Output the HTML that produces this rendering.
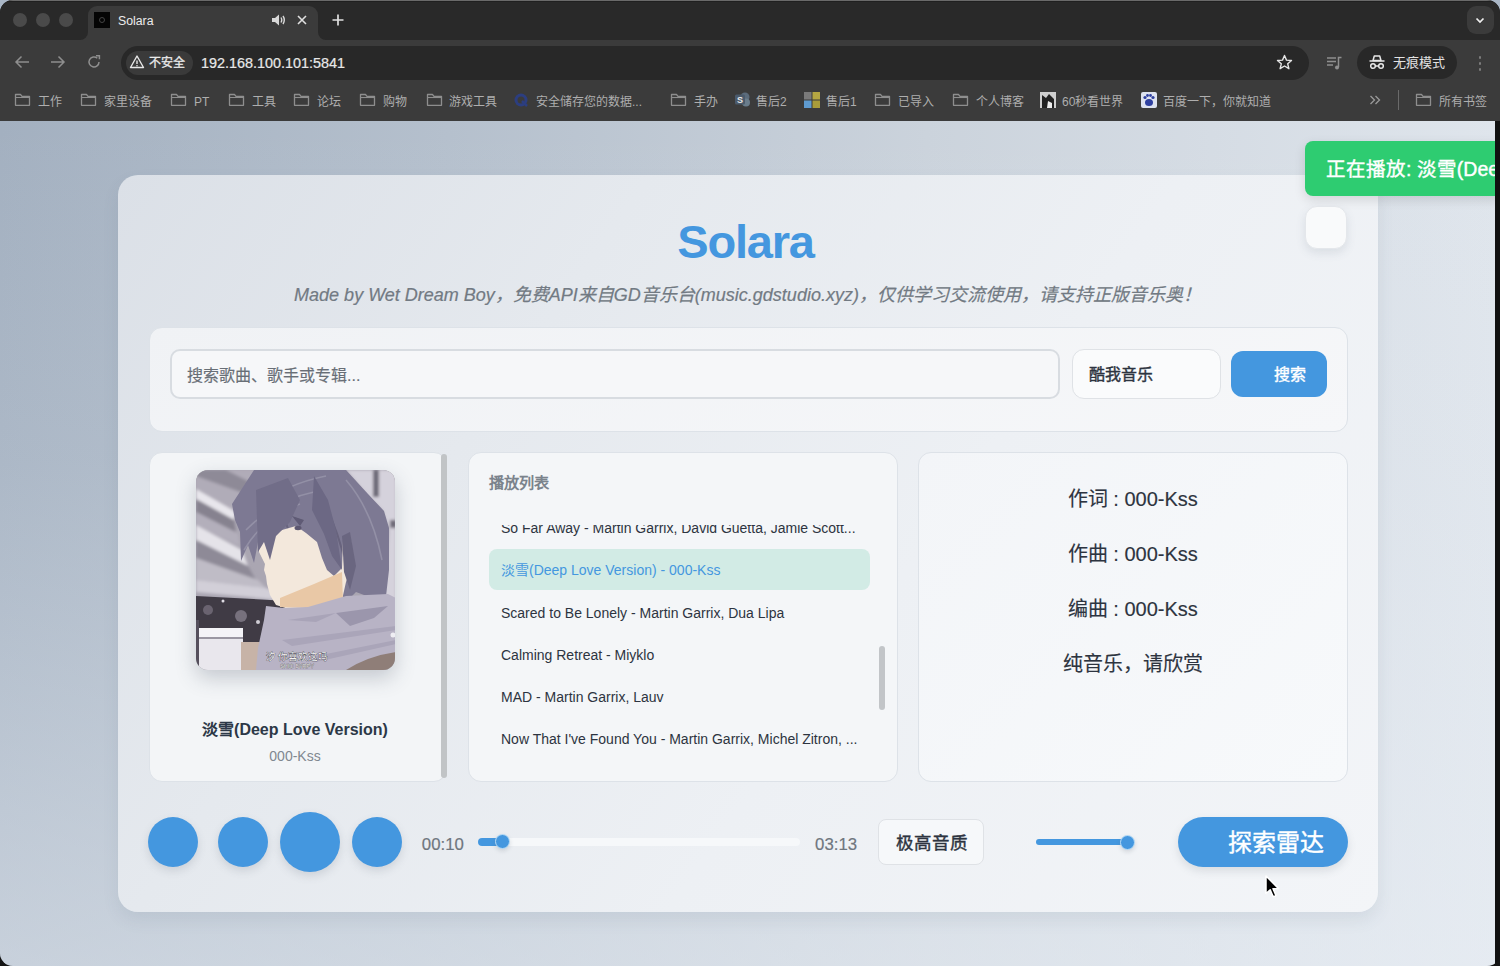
<!DOCTYPE html>
<html lang="zh-CN"><head><meta charset="utf-8">
<style>
*{margin:0;padding:0;box-sizing:border-box}
html,body{width:1500px;height:966px;overflow:hidden}
body{position:relative;background:linear-gradient(#a9b6c6 50%,#141414 50%);font-family:"Liberation Sans",sans-serif}
.abs{position:absolute}
#win{position:absolute;left:0;top:0;width:1500px;height:966px;overflow:hidden;border-radius:13px;background:#111}
#tabs{position:absolute;left:0;top:0;width:1500px;height:40px;background:#292929}
#toolbar{position:absolute;left:0;top:40px;width:1500px;height:81px;background:#3b3b3b}
#page{position:absolute;left:0;top:121px;width:1495px;height:845px;overflow:hidden;
 background:linear-gradient(180deg,rgba(236,241,247,0) 0%,rgba(236,241,247,.12) 40%,rgba(236,241,247,.5) 100%),linear-gradient(90deg,#a3b0c0 0%,#b5c0cd 30%,#cbd3dc 62%,#dfe5ec 100%)}
.t{position:absolute;white-space:nowrap}
</style></head>
<body>
<div id="win">
 <div id="tabs">
  <div class="abs" style="left:0;top:0;width:1500px;height:1px;background:#6a6a6a"></div>
  <div class="abs" style="left:0;top:1px;width:1500px;height:1px;background:#202020"></div>
  <div class="abs" style="left:13px;top:13px;width:14px;height:14px;border-radius:50%;background:#4a4a4a"></div>
  <div class="abs" style="left:36px;top:13px;width:14px;height:14px;border-radius:50%;background:#4a4a4a"></div>
  <div class="abs" style="left:59px;top:13px;width:14px;height:14px;border-radius:50%;background:#4a4a4a"></div>
  <!-- active tab -->
  <div class="abs" style="left:88px;top:6px;width:230px;height:40px;background:#3b3b3b;border-radius:9px 9px 0 0"></div>
  <div class="abs" style="left:80px;top:32px;width:8px;height:8px;background:#3b3b3b"></div>
  <div class="abs" style="left:72px;top:24px;width:16px;height:16px;background:#292929;border-radius:0 0 8px 0"></div>
  <div class="abs" style="left:318px;top:32px;width:8px;height:8px;background:#3b3b3b"></div>
  <div class="abs" style="left:318px;top:24px;width:16px;height:16px;background:#292929;border-radius:0 0 0 8px"></div>
  <div class="abs" style="left:94px;top:12px;width:16px;height:16px;background:#050505"></div>
  <div class="abs" style="left:99px;top:17px;width:6px;height:6px;border-radius:50%;border:1px solid #444"></div>
  <div class="t" style="left:118px;top:12.5px;font-size:12.3px;color:#ececec;line-height:16px">Solara</div>
  <svg class="abs" style="left:270px;top:13px" width="16" height="14" viewBox="0 0 16 14"><path d="M2 5h3l4-3.5v11L5 9H2z" fill="#d8d8d8"/><path d="M11 4.5q1.5 2.5 0 5M13 3q2.6 4 0 8" stroke="#d8d8d8" stroke-width="1.4" fill="none"/></svg>
  <svg class="abs" style="left:296px;top:14px" width="12" height="12" viewBox="0 0 12 12"><path d="M2 2L10 10M10 2L2 10" stroke="#e0e0e0" stroke-width="1.6"/></svg>
  <svg class="abs" style="left:331px;top:13px" width="14" height="14" viewBox="0 0 14 14"><path d="M7 1.5v11M1.5 7h11" stroke="#e0e0e0" stroke-width="1.7"/></svg>
  <div class="abs" style="left:1467px;top:6px;width:27px;height:28px;border-radius:9px;background:#3b3b3b"></div>
  <svg class="abs" style="left:1474px;top:14px" width="12" height="12" viewBox="0 0 12 12"><path d="M2.5 4.5L6 8L9.5 4.5" stroke="#f0f0f0" stroke-width="1.7" fill="none"/></svg>
 </div>
 <div id="toolbar">
  <svg class="abs" style="left:14px;top:15px" width="16" height="14" viewBox="0 0 16 14"><path d="M15 7H2M7.5 1.5L2 7l5.5 5.5" stroke="#8e8e8e" stroke-width="1.5" fill="none"/></svg>
  <svg class="abs" style="left:50px;top:15px" width="16" height="14" viewBox="0 0 16 14"><path d="M1 7h13M8.5 1.5L14 7l-5.5 5.5" stroke="#8e8e8e" stroke-width="1.5" fill="none"/></svg>
  <svg class="abs" style="left:87px;top:15px" width="14" height="14" viewBox="0 0 14 14"><path d="M12 7A5 5 0 1 1 10.3 3.2" stroke="#8e8e8e" stroke-width="1.5" fill="none"/><path d="M9 0.8h3.4v3.4" stroke="#8e8e8e" stroke-width="1.5" fill="none"/></svg>
  <div class="abs" style="left:121px;top:6px;width:1188px;height:34px;border-radius:17px;background:#282828"></div>
  <div class="abs" style="left:126px;top:11px;width:67px;height:24px;border-radius:12px;background:#3a3a3a"></div>
  <svg class="abs" style="left:129px;top:14px" width="16" height="16" viewBox="0 0 16 16"><path d="M8 2L14.5 13.5H1.5z" stroke="#e6e6e6" stroke-width="1.4" fill="none" stroke-linejoin="round"/><path d="M8 6.5v3.5" stroke="#e6e6e6" stroke-width="1.4"/><circle cx="8" cy="11.7" r="0.8" fill="#e6e6e6"/></svg>
  <div class="t" style="left:149px;top:15px;font-size:12px;line-height:16px;color:#eaeaea;-webkit-text-stroke:0.3px currentColor">不安全</div>
  <div class="t" style="left:201px;top:15px;font-size:14.4px;line-height:17px;color:#e8e8e8;-webkit-text-stroke:0.2px currentColor">192.168.100.101:5841</div>
  <svg class="abs" style="left:1276px;top:14px" width="17" height="16" viewBox="0 0 17 16"><path d="M8.5 1.5l2 4.6 5 .4-3.8 3.3 1.2 4.9-4.4-2.7-4.4 2.7 1.2-4.9L1.5 6.5l5-.4z" stroke="#e6e6e6" stroke-width="1.4" fill="none" stroke-linejoin="round"/></svg>
  <svg class="abs" style="left:1326px;top:15px" width="18" height="16" viewBox="0 0 18 16"><path d="M1 3h9M1 6.5h9M1 10h6" stroke="#8f8f8f" stroke-width="1.5"/><path d="M12.5 12V2.5h3" stroke="#8f8f8f" stroke-width="1.5" fill="none"/><circle cx="11" cy="12.5" r="2" fill="#8f8f8f"/></svg>
  <div class="abs" style="left:1357px;top:6px;width:100px;height:33px;border-radius:17px;background:#282828"></div>
  <svg class="abs" style="left:1369px;top:13px" width="16" height="18" viewBox="0 0 16 18"><path d="M4 7.5L5.3 3h5.4L12 7.5z" fill="none" stroke="#e8e8e8" stroke-width="1.5" stroke-linejoin="round"/><path d="M0.5 8h15" stroke="#e8e8e8" stroke-width="1.6"/><circle cx="4" cy="13" r="2.3" stroke="#e8e8e8" stroke-width="1.5" fill="none"/><circle cx="12" cy="13" r="2.3" stroke="#e8e8e8" stroke-width="1.5" fill="none"/><path d="M6.3 13h3.4" stroke="#e8e8e8" stroke-width="1.3"/></svg>
  <div class="t" style="left:1393px;top:14px;font-size:13px;line-height:17px;color:#e2e2e2">无痕模式</div>
  <div class="abs" style="left:1478.5px;top:16px;width:2.5px;height:2.5px;border-radius:50%;background:#7c7c7c;box-shadow:0 6px 0 #7c7c7c,0 12px 0 #7c7c7c"></div>
  <!-- bookmarks -->
  <svg class="abs" style="left:14px;top:52px" width="17" height="15" viewBox="0 0 17 15"><path d="M1.5 2.5h5l1.5 1.8h7.5v9H1.5z" stroke="#8e8e8e" stroke-width="1.3" fill="none" stroke-linejoin="round"/><path d="M1.5 5.5h14" stroke="#8e8e8e" stroke-width="1.1"/></svg>
  <div class="t" style="left:38px;top:54px;font-size:12px;line-height:16px;color:#aeaeae">工作</div>
  <svg class="abs" style="left:80px;top:52px" width="17" height="15" viewBox="0 0 17 15"><path d="M1.5 2.5h5l1.5 1.8h7.5v9H1.5z" stroke="#8e8e8e" stroke-width="1.3" fill="none" stroke-linejoin="round"/><path d="M1.5 5.5h14" stroke="#8e8e8e" stroke-width="1.1"/></svg>
  <div class="t" style="left:104px;top:54px;font-size:12px;line-height:16px;color:#aeaeae">家里设备</div>
  <svg class="abs" style="left:170px;top:52px" width="17" height="15" viewBox="0 0 17 15"><path d="M1.5 2.5h5l1.5 1.8h7.5v9H1.5z" stroke="#8e8e8e" stroke-width="1.3" fill="none" stroke-linejoin="round"/><path d="M1.5 5.5h14" stroke="#8e8e8e" stroke-width="1.1"/></svg>
  <div class="t" style="left:194px;top:54px;font-size:12px;line-height:16px;color:#aeaeae">PT</div>
  <svg class="abs" style="left:228px;top:52px" width="17" height="15" viewBox="0 0 17 15"><path d="M1.5 2.5h5l1.5 1.8h7.5v9H1.5z" stroke="#8e8e8e" stroke-width="1.3" fill="none" stroke-linejoin="round"/><path d="M1.5 5.5h14" stroke="#8e8e8e" stroke-width="1.1"/></svg>
  <div class="t" style="left:252px;top:54px;font-size:12px;line-height:16px;color:#aeaeae">工具</div>
  <svg class="abs" style="left:293px;top:52px" width="17" height="15" viewBox="0 0 17 15"><path d="M1.5 2.5h5l1.5 1.8h7.5v9H1.5z" stroke="#8e8e8e" stroke-width="1.3" fill="none" stroke-linejoin="round"/><path d="M1.5 5.5h14" stroke="#8e8e8e" stroke-width="1.1"/></svg>
  <div class="t" style="left:317px;top:54px;font-size:12px;line-height:16px;color:#aeaeae">论坛</div>
  <svg class="abs" style="left:359px;top:52px" width="17" height="15" viewBox="0 0 17 15"><path d="M1.5 2.5h5l1.5 1.8h7.5v9H1.5z" stroke="#8e8e8e" stroke-width="1.3" fill="none" stroke-linejoin="round"/><path d="M1.5 5.5h14" stroke="#8e8e8e" stroke-width="1.1"/></svg>
  <div class="t" style="left:383px;top:54px;font-size:12px;line-height:16px;color:#aeaeae">购物</div>
  <svg class="abs" style="left:426px;top:52px" width="17" height="15" viewBox="0 0 17 15"><path d="M1.5 2.5h5l1.5 1.8h7.5v9H1.5z" stroke="#8e8e8e" stroke-width="1.3" fill="none" stroke-linejoin="round"/><path d="M1.5 5.5h14" stroke="#8e8e8e" stroke-width="1.1"/></svg>
  <div class="t" style="left:449px;top:54px;font-size:12px;line-height:16px;color:#aeaeae">游戏工具</div>
  <svg class="abs" style="left:513px;top:52px" width="17" height="16" viewBox="0 0 17 16"><circle cx="8" cy="8" r="6.5" fill="#2c3e80"/><circle cx="8" cy="8" r="3.5" fill="#3b3b3b"/><path d="M9 9l5 5" stroke="#2c3e80" stroke-width="2.5"/></svg>
  <div class="t" style="left:536px;top:54px;font-size:12px;line-height:16px;color:#aeaeae">安全储存您的数据...</div>
  <svg class="abs" style="left:670px;top:52px" width="17" height="15" viewBox="0 0 17 15"><path d="M1.5 2.5h5l1.5 1.8h7.5v9H1.5z" stroke="#8e8e8e" stroke-width="1.3" fill="none" stroke-linejoin="round"/><path d="M1.5 5.5h14" stroke="#8e8e8e" stroke-width="1.1"/></svg>
  <div class="t" style="left:694px;top:54px;font-size:12px;line-height:16px;color:#aeaeae">手办</div>
  <svg class="abs" style="left:734px;top:51px" width="17" height="17" viewBox="0 0 17 17"><circle cx="11" cy="6" r="4.5" fill="#5b6b7b"/><circle cx="12" cy="11.5" r="4" fill="#6a7d8c"/><rect x="1" y="3.5" width="10" height="10" rx="1.5" fill="#4b5a6b"/><text x="6" y="12" font-size="9" font-weight="bold" fill="#e8e8e8" text-anchor="middle" font-family="Liberation Sans">S</text></svg>
  <div class="t" style="left:756px;top:54px;font-size:12px;line-height:16px;color:#aeaeae">售后2</div>
  <svg class="abs" style="left:804px;top:52px" width="16" height="16" viewBox="0 0 16 16"><rect x="0" y="0" width="7.5" height="7.5" fill="#7a7a7a"/><rect x="8.5" y="0" width="7.5" height="7.5" fill="#b5a642"/><rect x="0" y="8.5" width="7.5" height="7.5" fill="#5f9bd0"/><rect x="8.5" y="8.5" width="7.5" height="7.5" fill="#a89c3a"/></svg>
  <div class="t" style="left:826px;top:54px;font-size:12px;line-height:16px;color:#aeaeae">售后1</div>
  <svg class="abs" style="left:874px;top:52px" width="17" height="15" viewBox="0 0 17 15"><path d="M1.5 2.5h5l1.5 1.8h7.5v9H1.5z" stroke="#8e8e8e" stroke-width="1.3" fill="none" stroke-linejoin="round"/><path d="M1.5 5.5h14" stroke="#8e8e8e" stroke-width="1.1"/></svg>
  <div class="t" style="left:898px;top:54px;font-size:12px;line-height:16px;color:#aeaeae">已导入</div>
  <svg class="abs" style="left:952px;top:52px" width="17" height="15" viewBox="0 0 17 15"><path d="M1.5 2.5h5l1.5 1.8h7.5v9H1.5z" stroke="#8e8e8e" stroke-width="1.3" fill="none" stroke-linejoin="round"/><path d="M1.5 5.5h14" stroke="#8e8e8e" stroke-width="1.1"/></svg>
  <div class="t" style="left:976px;top:54px;font-size:12px;line-height:16px;color:#aeaeae">个人博客</div>
  <svg class="abs" style="left:1040px;top:52px" width="16" height="16" viewBox="0 0 16 16"><rect width="16" height="16" fill="#cfcfcf"/><path d="M2 3l4 3 3-4 5 5v9H2z" fill="#222"/><path d="M8 9l4 2v5H7z" fill="#eee"/></svg>
  <div class="t" style="left:1062px;top:54px;font-size:12px;line-height:16px;color:#aeaeae">60秒看世界</div>
  <svg class="abs" style="left:1141px;top:52px" width="16" height="16" viewBox="0 0 16 16"><rect width="16" height="16" rx="2" fill="#dde2f0"/><ellipse cx="8" cy="10.5" rx="4" ry="3.5" fill="#2e3fa0"/><circle cx="4" cy="5.5" r="1.6" fill="#2e3fa0"/><circle cx="12" cy="5.5" r="1.6" fill="#2e3fa0"/><circle cx="6.5" cy="3.5" r="1.4" fill="#2e3fa0"/><circle cx="9.5" cy="3.5" r="1.4" fill="#2e3fa0"/></svg>
  <div class="t" style="left:1163px;top:54px;font-size:12px;line-height:16px;color:#aeaeae">百度一下，你就知道</div>
  <svg class="abs" style="left:1369px;top:55px" width="12" height="10" viewBox="0 0 12 10"><path d="M1.5 1l4 4-4 4M6.5 1l4 4-4 4" stroke="#9a9a9a" stroke-width="1.3" fill="none"/></svg>
  <div class="abs" style="left:1398px;top:50px;width:1px;height:20px;background:#6a6a6a"></div>
  <svg class="abs" style="left:1415px;top:52px" width="17" height="15" viewBox="0 0 17 15"><path d="M1.5 2.5h5l1.5 1.8h7.5v9H1.5z" stroke="#8e8e8e" stroke-width="1.3" fill="none" stroke-linejoin="round"/><path d="M1.5 5.5h14" stroke="#8e8e8e" stroke-width="1.1"/></svg>
  <div class="t" style="left:1439px;top:54px;font-size:12px;line-height:16px;color:#aeaeae">所有书签</div>
 </div>
 <div id="page">
  <div id="card" class="abs" style="left:117.5px;top:54px;width:1260.5px;height:737px;border-radius:20px;background:linear-gradient(125deg,#dbe0e7 0%,#e5e9ee 30%,#edf0f4 60%,#f3f5f8 100%);box-shadow:0 8px 16px rgba(80,95,115,.10)"></div>
  <div class="t" id="title" style="left:-2px;width:1495px;text-align:center;top:94px;font-size:47px;line-height:54px;letter-spacing:-1.2px;font-weight:bold;color:#4497df">Solara</div>
  <div class="t" id="sub" style="left:0;width:1495px;text-align:center;top:162.7px;font-size:18px;line-height:22px;font-style:italic;color:#727a83;-webkit-text-stroke:0.2px currentColor">Made by Wet Dream Boy，免费API来自GD音乐台(music.gdstudio.xyz)，仅供学习交流使用，请支持正版音乐奥！</div>
  <!-- search panel -->
  <div class="abs" style="left:148.5px;top:205.5px;width:1199px;height:105px;border-radius:13px;background:linear-gradient(160deg,#f0f2f5,#f6f7f9);border:1px solid #dde2e8"></div>
  <div class="abs" style="left:169.5px;top:227.5px;width:890.5px;height:50.5px;border-radius:10px;background:#f6f7f9;border:2px solid #d8dce1"></div>
  <div class="t" style="left:187px;top:244.5px;font-size:16px;line-height:20px;color:#686e76;-webkit-text-stroke:0.15px currentColor">搜索歌曲、歌手或专辑...</div>
  <div class="abs" style="left:1071.5px;top:228px;width:149px;height:50px;border-radius:12px;background:#fafbfc;border:1px solid #dfe2e6"></div>
  <div class="t" style="left:1089px;top:244px;font-size:16px;line-height:20px;color:#2d3440;font-weight:400;-webkit-text-stroke:0.4px currentColor">酷我音乐</div>
  <div class="abs" style="left:1231px;top:230px;width:96px;height:46px;border-radius:12px;background:#4497df"></div>
  <div class="t" style="left:1274px;top:244px;font-size:16px;line-height:20px;color:#fff;font-weight:400;-webkit-text-stroke:0.4px currentColor">搜索</div>
  <!-- left panel -->
  <div class="abs" style="left:148.5px;top:331px;width:298.5px;height:329.5px;border-radius:13px;background:#f3f5f7;border:1px solid #dde2e8"></div>
  <div class="abs" style="left:441px;top:333px;width:6px;height:324px;border-radius:3px;background:#c1c4c6"></div>
  <div id="art" class="abs" style="left:195.5px;top:349px;width:199px;height:199.5px;border-radius:12px;overflow:hidden;background:#aaa;box-shadow:0 8px 20px rgba(60,70,90,.25)"><svg width="200" height="200" viewBox="0 0 200 200" style="display:block">
<defs><filter id="bl" x="-5%" y="-5%" width="110%" height="110%"><feGaussianBlur stdDeviation="0.6"/></filter>
<filter id="bl2" x="-5%" y="-5%" width="110%" height="110%"><feGaussianBlur stdDeviation="1.5"/></filter></defs>
<rect width="200" height="200" fill="#aaa6b2"/>
<g filter="url(#bl2)">
<path d="M0 0H60V40H0z" fill="#b0acb8"/>
<path d="M0 0H30L62 16L50 24L0 6z" fill="#8e8a97"/>
<path d="M0 19L40 42L38 50L0 29z" fill="#e8e6ec"/>
<path d="M0 29L38 50L40 62L0 42z" fill="#86828f"/>
<path d="M0 42L42 64L44 76L0 55z" fill="#b3afbb"/>
<path d="M0 55L46 80L52 96L0 70z" fill="#e5e3e9"/>
<path d="M0 70L52 96L60 110L0 88z" fill="#8e8a97"/>
<path d="M0 88L62 110L70 118L0 110z" fill="#bfbcc6"/>
<path d="M0 110L70 118L92 126L92 131L0 122z" fill="#d2cfd8"/>
<path d="M150 0H200V130H188L193 60L186 40L170 24z" fill="#d5d2dc"/>
<path d="M177 0h6v27h-6z" fill="#6d6977"/>
<path d="M194 50h6v8h-6z" fill="#6d6977"/>
<path d="M114 0h24v5h-24z" fill="#f3f1f5"/>
</g>
<g filter="url(#bl)">
<path d="M0 126L92 131L72 176L0 168z" fill="#3f3b45"/>
<circle cx="12" cy="140" r="5" fill="#6a6470"/>
<circle cx="45" cy="146" r="6" fill="#77717d"/>
<circle cx="27" cy="131" r="1.5" fill="#e0dde4"/>
<circle cx="62" cy="152" r="2" fill="#d0cdd5"/>
<path d="M3 158H47V200H3z" fill="#e9e7ed"/>
<path d="M3 158H47V167H3z" fill="#f4f3f7"/>
<path d="M3 167H47V169H3z" fill="#9a96a2"/>
<path d="M0 150H3V200H0z" fill="#55505c"/>
<path d="M45 172H64V200H45z" fill="#c7b3a7"/>
<!-- hair mass -->
<path d="M58 0H150L172 24L188 41L193 58L193 100L190 126L176 128L160 122L150 132L84 132L66 80L62 72L58 93L52 75L45 91L44 62L39 50L36 34z" fill="#7d7993"/>
<path d="M62 36Q90 14 130 6M50 60Q80 30 118 22M48 80Q70 44 104 34M150 10Q176 40 186 90" stroke="#9390a6" stroke-width="1.6" fill="none"/>
<path d="M70 30Q96 50 92 70M120 20Q140 50 150 96" stroke="#67637d" stroke-width="2" fill="none"/>
<!-- face -->
<path d="M100 56L110 63L121 72L126 88L131 100L138 106L146 98L147 68L155 70L156 94L150 112L146 130L120 136L96 140L80 135L74 125L71 114L70 106L68 100L69 94L63 82L63 70L74 66L86 60z" fill="#f3e8dc"/>
<!-- neck -->
<path d="M84 128L118 114L146 102L147 133L112 138L84 137z" fill="#e9c8a6"/>
<!-- hair strands / locks -->
<path d="M60 20L92 8L104 30L94 52L80 66L74 90L68 72L62 82z" fill="#716d88"/>
<path d="M118 6L132 30L140 60L146 100L136 86L128 64L116 40z" fill="#6c6884"/>
<path d="M146 66L154 62L160 96L154 120L148 102z" fill="#6a6680"/>
<path d="M96 46L108 50L104 56z" fill="#5e5a74"/>
<ellipse cx="102" cy="58" rx="3.5" ry="2.2" fill="#5b5770"/>
<!-- scarf -->
<path d="M70 136L88 138L112 137L150 126L192 124L200 128V200H60L62 178L68 150z" fill="#b8b3c5"/>
<path d="M140 143L192 136L178 148L154 156z" fill="#9b96ac"/>
<path d="M92 150L140 143L120 152z" fill="#a9a4b8"/>
<path d="M86 170L200 156V160L96 176z" fill="#aaa5b9"/>
<path d="M110 188L200 170V174L120 192z" fill="#aaa5b9"/>
<path d="M150 200Q172 186 200 182V200z" fill="#8f7e78"/>
<circle cx="197" cy="165" r="2.5" fill="#efeef3"/>
</g>
<text x="101" y="189.5" font-size="9.5" fill="#f4f4f4" stroke="#3a3a44" stroke-width="0.6" paint-order="stroke" text-anchor="middle" font-family="Liberation Sans">汐 你喜欢这吗</text>
<text x="101" y="197.5" font-size="5.5" fill="#eee" stroke="#444" stroke-width="0.4" paint-order="stroke" text-anchor="middle" font-family="Liberation Sans">SHIO BYRPY</text>
</svg></div>
  <div class="t" style="left:149.5px;width:291px;text-align:center;top:597.8px;font-size:16px;line-height:22px;font-weight:bold;color:#2c3847">淡雪(Deep Love Version)</div>
  <div class="t" style="left:149.5px;width:291px;text-align:center;top:626px;font-size:14px;line-height:18px;color:#808890">000-Kss</div>
  <!-- playlist -->
  <div class="abs" style="left:468px;top:331px;width:429.5px;height:329.5px;border-radius:13px;background:#f4f6f8;border:1px solid #dde2e8;overflow:hidden">
   <div class="t" style="left:20px;top:19.7px;font-size:15.2px;line-height:20px;font-weight:bold;color:#7b838c">播放列表</div>
   <div class="abs" style="left:0px;top:72.3px;width:429px;height:256px;overflow:hidden">
   <div class="t" style="left:32px;top:-6.3px;font-size:14px;line-height:18px;color:#2d3440">So Far Away - Martin Garrix, David Guetta, Jamie Scott...</div>
   <div class="abs" style="left:19.5px;top:23.7px;width:381px;height:41px;border-radius:8px;background:#d2ebe5"></div>
   <div class="t" style="left:32px;top:35.7px;font-size:14px;line-height:18px;color:#4497df">淡雪(Deep Love Version) - 000-Kss</div>
   <div class="t" style="left:32px;top:78.7px;font-size:14px;line-height:18px;color:#2d3440">Scared to Be Lonely - Martin Garrix, Dua Lipa</div>
   <div class="t" style="left:32px;top:120.7px;font-size:14px;line-height:18px;color:#2d3440">Calming Retreat - Miyklo</div>
   <div class="t" style="left:32px;top:162.7px;font-size:14px;line-height:18px;color:#2d3440">MAD - Martin Garrix, Lauv</div>
   <div class="t" style="left:32px;top:204.7px;font-size:14px;line-height:18px;color:#2d3440">Now That I've Found You - Martin Garrix, Michel Zitron, ...</div>
   </div>
   <div class="abs" style="left:410px;top:193px;width:6px;height:64px;border-radius:3px;background:#c2c5c8"></div>
  </div>
  <!-- lyrics -->
  <div class="abs" style="left:917.5px;top:331px;width:430px;height:329.5px;border-radius:13px;background:linear-gradient(135deg,#f3f5f8,#f7f9fb);border:1px solid #dde2e8"></div>
  <div class="t" style="left:918.5px;width:428.5px;text-align:center;top:366.3px;font-size:20px;line-height:24px;color:#2d3440;-webkit-text-stroke:0.15px currentColor">作词 : 000-Kss</div>
  <div class="t" style="left:918.5px;width:428.5px;text-align:center;top:421.3px;font-size:20px;line-height:24px;color:#2d3440;-webkit-text-stroke:0.15px currentColor">作曲 : 000-Kss</div>
  <div class="t" style="left:918.5px;width:428.5px;text-align:center;top:476.3px;font-size:20px;line-height:24px;color:#2d3440;-webkit-text-stroke:0.15px currentColor">编曲 : 000-Kss</div>
  <div class="t" style="left:918.5px;width:428.5px;text-align:center;top:531.3px;font-size:20px;line-height:24px;color:#2d3440;-webkit-text-stroke:0.15px currentColor">纯音乐，请欣赏</div>
  <!-- controls -->
  <div class="abs" style="left:148px;top:696px;width:50px;height:50px;border-radius:50%;background:#4497df;box-shadow:0 4px 8px rgba(90,100,115,.18)"></div>
  <div class="abs" style="left:218px;top:696px;width:50px;height:50px;border-radius:50%;background:#4497df;box-shadow:0 4px 8px rgba(90,100,115,.18)"></div>
  <div class="abs" style="left:280px;top:691px;width:60px;height:60px;border-radius:50%;background:#4497df;box-shadow:0 4px 8px rgba(90,100,115,.18)"></div>
  <div class="abs" style="left:352px;top:696px;width:50px;height:50px;border-radius:50%;background:#4497df;box-shadow:0 4px 8px rgba(90,100,115,.18)"></div>
  <div class="t" style="left:421.8px;top:714.2px;font-size:16.8px;line-height:20px;color:#6f767e;-webkit-text-stroke:0.2px currentColor">00:10</div>
  <div class="abs" style="left:478px;top:717px;width:322px;height:8px;border-radius:4px;background:#f6f8fa"></div>
  <div class="abs" style="left:478px;top:717px;width:24px;height:8px;border-radius:4px;background:#4497df"></div>
  <div class="abs" style="left:494.5px;top:713px;width:15px;height:15px;border-radius:50%;background:#4497df;border:1.5px solid #b9ddf7;box-shadow:0 2px 4px rgba(90,100,115,.2)"></div>
  <div class="t" style="left:815.1px;top:714.2px;font-size:16.8px;line-height:20px;color:#6f767e;-webkit-text-stroke:0.2px currentColor">03:13</div>
  <div class="abs" style="left:878px;top:698px;width:106px;height:46px;border-radius:8px;background:#f6f8fa;border:1px solid #dfe2e6"></div>
  <div class="t" style="left:878px;width:106px;text-align:center;top:711.7px;font-size:17.5px;line-height:20px;letter-spacing:1px;text-indent:1px;font-weight:400;-webkit-text-stroke:0.4px currentColor;color:#2d3440">极高音质</div>
  <div class="abs" style="left:1036px;top:718px;width:95px;height:6px;border-radius:3px;background:#4497df"></div>
  <div class="abs" style="left:1119.5px;top:713.5px;width:15px;height:15px;border-radius:50%;background:#4497df;border:1.5px solid #b9ddf7;box-shadow:0 2px 4px rgba(90,100,115,.2)"></div>
  <div class="abs" style="left:1178px;top:696px;width:170px;height:50px;border-radius:25px;background:#4497df;box-shadow:0 4px 8px rgba(90,100,115,.16)"></div>
  <div class="t" style="left:1227.5px;top:707.6px;font-size:24px;line-height:28px;color:#fff;font-weight:400;-webkit-text-stroke:0.4px currentColor">探索雷达</div>
  <!-- toast & square -->
  <div class="abs" style="left:1305px;top:20px;width:200px;height:54.8px;border-radius:8px;background:#2ecc71;box-shadow:0 4px 12px rgba(0,0,0,.12)"></div>
  <div class="t" style="left:1326px;top:36.7px;font-size:19.5px;line-height:22px;color:#fff;font-weight:400;-webkit-text-stroke:0.4px currentColor">正在播放: 淡雪(Deep Love Version)</div>
  <div class="abs" style="left:1304.5px;top:85.3px;width:42.5px;height:43px;border-radius:12px;background:#f9fafb;border:1px solid #e4e7eb;box-shadow:0 4px 10px rgba(80,95,115,.13)"></div>
  <!-- cursor -->
  <svg class="abs" style="left:1264px;top:753px" width="20" height="28" viewBox="0 0 20 28"><path d="M2 2L2 19.5L6.2 15.8L9.2 22.8L12 21.6L9 14.8L14.6 14.6Z" fill="#000" stroke="#fff" stroke-width="1.5" stroke-linejoin="round"/></svg>
 </div>
</div>
</body></html>
